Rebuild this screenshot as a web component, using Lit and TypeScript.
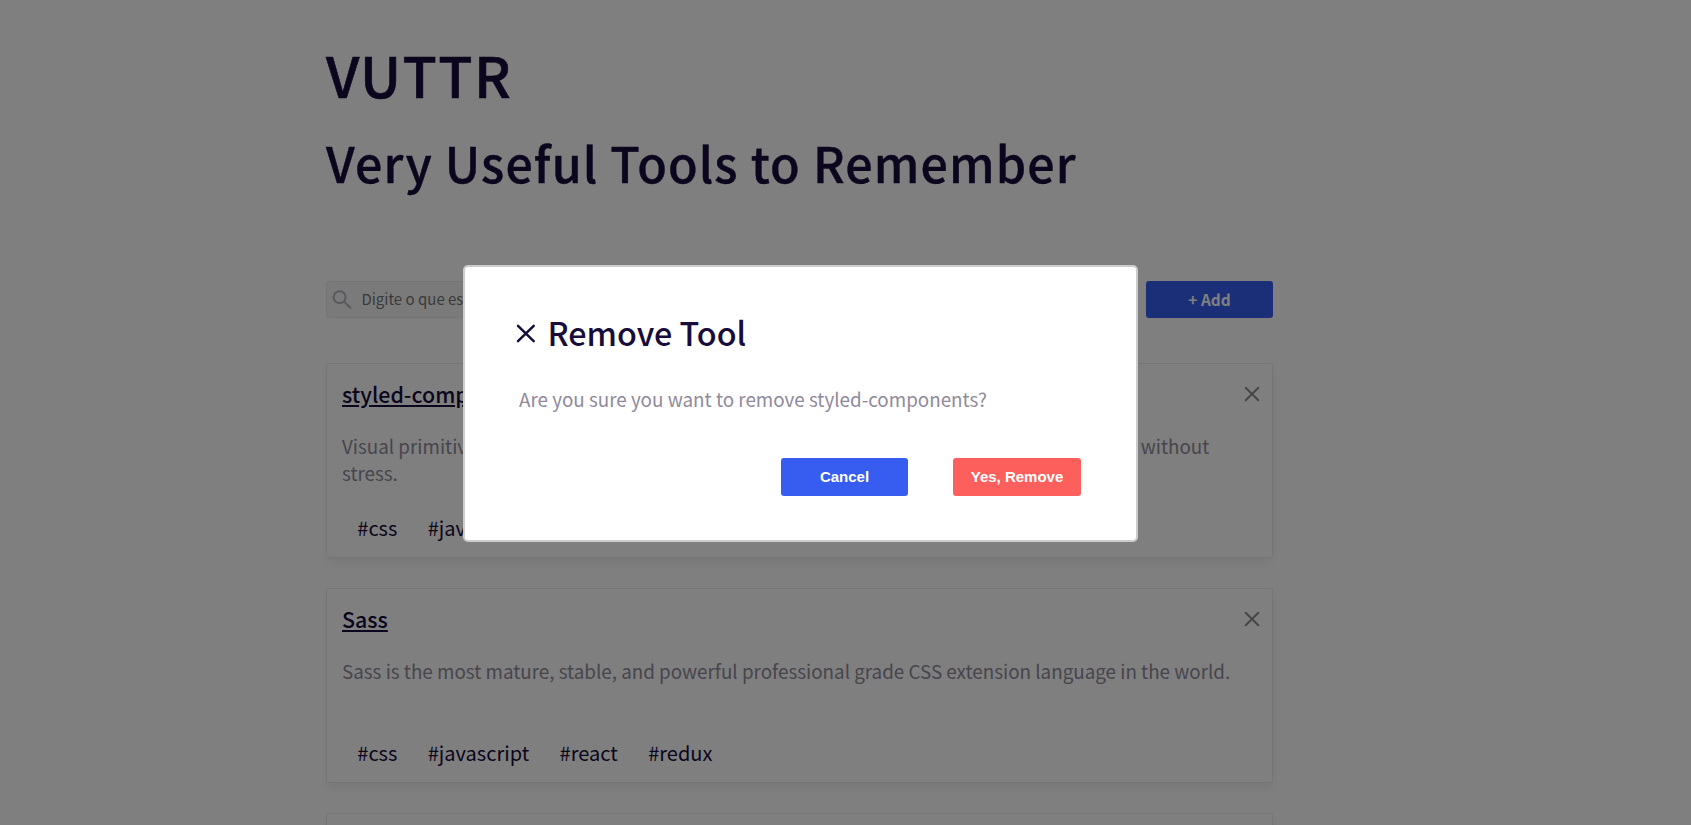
import { LitElement, html, css } from "lit";
import { customElement, state } from "lit/decorators.js";

interface Tool {
  title: string;
  description: string;
  tags: string[];
}

const tags = ["css", "javascript", "react", "redux"];

@customElement("app-root")
export class AppRoot extends LitElement {
  @state() private tools: Tool[] = [
    {
      title: "styled-components",
      description:
        "Visual primitives for the component age. Use the best bits of ES6 and CSS to style your apps without stress.",
      tags,
    },
    {
      title: "Sass",
      description:
        "Sass is the most mature, stable, and powerful professional grade CSS extension language in the world.",
      tags,
    },
  ];

  static styles = css`
    :host {
      display: block;
      position: relative;
      height: 825px;
      overflow: hidden;
      background: #fff;
      color: #170c3a;
      font-family: "Noto Sans CJK SC", sans-serif;
    }
    * {
      box-sizing: border-box;
    }
    .page {
      width: 947px;
      margin-left: 326px;
      padding-top: 39px;
    }
    h1,
    h2,
    h3,
    p {
      margin: 0;
      font-weight: 500;
    }
    h1 {
      font-size: 56.1px;
      line-height: 70px;
      letter-spacing: 1.4px;
      -webkit-text-stroke: 0.6px currentColor;
    }
    h2 {
      margin-top: 18px;
      font-size: 48.4px;
      line-height: 70px;
      letter-spacing: 1.1px;
      -webkit-text-stroke: 0.4px currentColor;
    }
    .toolbar {
      display: flex;
      justify-content: space-between;
      margin-top: 84px;
      margin-bottom: 45px;
    }
    .search {
      display: flex;
      align-items: center;
      width: 360px;
      height: 37px;
      padding-left: 5px;
      gap: 9.4px;
      border: 1px solid #ebeaed;
      border-radius: 3px;
      background: #f5f4f6;
      color: #757575;
      font-size: 15px;
      line-height: 33px;
    }
    .search span {
      padding-bottom: 2px;
    }
    .search svg {
      width: 20px;
      height: 20px;
    }
    .button {
      display: flex;
      align-items: center;
      justify-content: center;
      width: 127px;
      height: 38px;
      padding: 0 0 2px;
      border: 0;
      border-radius: 3px;
      background: #365df0;
      color: #fff;
      font: bold 15px "Liberation Sans", Arial, sans-serif;
    }
    .add {
      height: 37px;
      font: bold 15.4px "Noto Sans CJK SC", sans-serif;
    }
    .danger {
      width: 128px;
      background: #fc5f5c;
    }
    .card {
      height: 195px;
      margin-bottom: 30px;
      padding: 15px;
      border: 1px solid #ebeaed;
      border-radius: 2px;
      box-shadow: 0 5px 10px rgba(0, 0, 0, 0.06);
    }
    .card-head {
      display: flex;
      justify-content: space-between;
    }
    .card h3 {
      font-size: 21.4px;
      line-height: 30px;
      text-decoration: underline;
      text-decoration-thickness: 2px;
      text-underline-offset: 2px;
    }
    .close {
      width: 16px;
      height: 16px;
      margin: 7.4px -3px 0 0;
    }
    .text {
      color: #8f8a9b;
      font-size: 18.82px;
      font-weight: 400;
      line-height: 27px;
    }
    .card .text {
      height: 54px;
      margin: 23px 0 27px;
    }
    .tags {
      display: flex;
      gap: 30.4px;
      padding-left: 15.3px;
      font-size: 20px;
      line-height: 30px;
    }
    .overlay {
      position: absolute;
      inset: 0;
      padding: 265px 0 0 463px;
      background: rgba(0, 0, 0, 0.5);
    }
    .modal {
      width: 674.5px;
      height: 277px;
      padding: 43px 54.5px 0 51px;
      border: 2px solid #ccc;
      border-radius: 5px;
      background: #fff;
    }
    .modal-head {
      display: flex;
      align-items: center;
      gap: 11.4px;
      height: 44px;
      font-size: 32.3px;
      font-weight: 500;
      line-height: 44px;
    }
    .modal-head svg {
      width: 20px;
      height: 20px;
      margin-top: 4px;
    }
    .modal .text {
      margin: 31px 0 0 3px;
    }
    .actions {
      display: flex;
      justify-content: flex-end;
      gap: 45px;
      margin-top: 46px;
    }
  `;

  private card(tool: Tool) {
    return html`
      <article class="card">
        <div class="card-head">
          <h3>${tool.title}</h3>
          <svg class="close" viewBox="0 0 16 16" stroke="#8e8c93" stroke-width="2" stroke-linecap="round">
            <path d="M1.7 1.7 14.3 14.3M14.3 1.7 1.7 14.3" />
          </svg>
        </div>
        <p class="text">${tool.description}</p>
        <div class="tags">${tool.tags.map((tag) => html`<span>#${tag}</span>`)}</div>
      </article>
    `;
  }

  render() {
    return html`
      <main class="page">
        <h1>VUTTR</h1>
        <h2>Very Useful Tools to Remember</h2>
        <div class="toolbar">
          <div class="search">
            <svg viewBox="0 0 20 20" fill="none" stroke="#b1adb9" stroke-width="1.9" stroke-linecap="round">
              <circle cx="7.6" cy="7.2" r="6" />
              <path d="M12 11.6 18.4 17.8" />
            </svg>
            <span>Digite o que está buscando</span>
          </div>
          <button class="button add">+ Add</button>
        </div>
        ${this.tools.map((tool) => this.card(tool))}
        <article class="card"></article>
      </main>
      <div class="overlay">
        <section class="modal">
          <div class="modal-head">
            <svg viewBox="0 0 20 20" stroke="#170c3a" stroke-width="2.5" stroke-linecap="round">
              <path d="M2 1.9 17.7 17.2M17.7 1.9 2 17.2" />
            </svg>
            <span>Remove Tool</span>
          </div>
          <p class="text">Are you sure you want to remove styled-components?</p>
          <div class="actions">
            <button class="button">Cancel</button>
            <button class="button danger">Yes, Remove</button>
          </div>
        </section>
      </div>
    `;
  }
}
